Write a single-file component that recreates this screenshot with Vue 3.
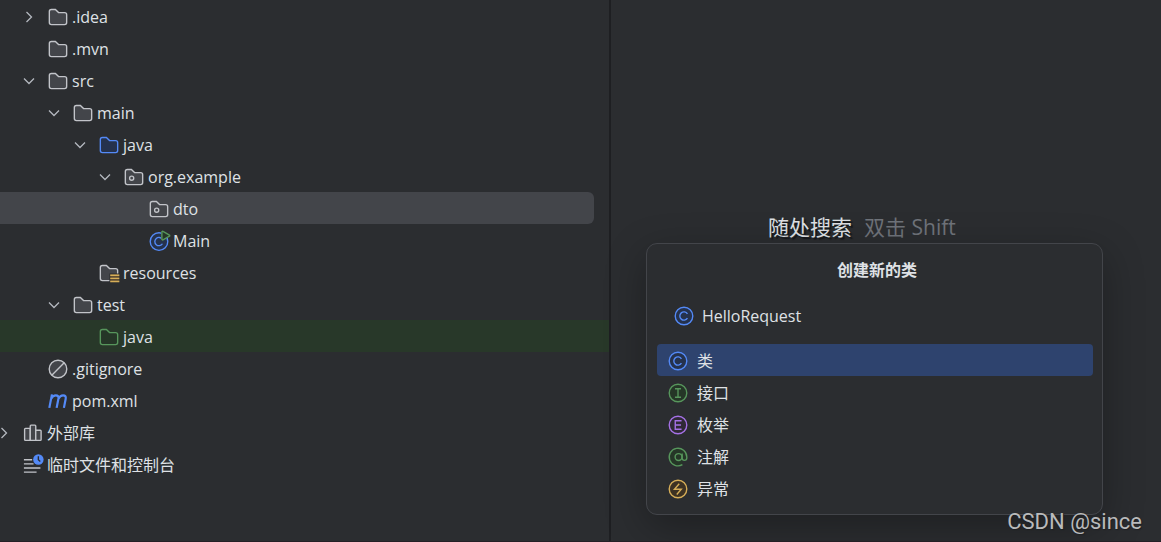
<script setup>
import { ref } from 'vue'

const INDENTS = [0, 25, 50, 76, 101, 126]

const rows = [
  { label: '.idea', depth: 1, icon: 'folder', arrow: 'right' },
  { label: '.mvn', depth: 1, icon: 'folder' },
  { label: 'src', depth: 1, icon: 'folder', arrow: 'down' },
  { label: 'main', depth: 2, icon: 'folder', arrow: 'down' },
  { label: 'java', depth: 3, icon: 'folder', tone: 'blue', arrow: 'down' },
  { label: 'org.example', depth: 4, icon: 'package', arrow: 'down' },
  { label: 'dto', depth: 5, icon: 'package', state: 'selected' },
  { label: 'Main', depth: 5, icon: 'runnable' },
  { label: 'resources', depth: 3, icon: 'resources' },
  { label: 'test', depth: 2, icon: 'folder', arrow: 'down' },
  { label: 'java', depth: 3, icon: 'folder', tone: 'green', state: 'tests' },
  { label: '.gitignore', depth: 1, icon: 'ignored' },
  { label: 'pom.xml', depth: 1, icon: 'maven' },
  { label: '外部库', depth: 0, icon: 'library', arrow: 'right' },
  { label: '临时文件和控制台', depth: 0, icon: 'scratches' },
]

const kinds = [
  { id: 'class', label: '类', tone: 'blue' },
  { id: 'interface', label: '接口', tone: 'green' },
  { id: 'enum', label: '枚举', tone: 'purple' },
  { id: 'annotation', label: '注解', tone: 'green' },
  { id: 'exception', label: '异常', tone: 'amber' },
]

const name = ref('HelloRequest')
const kind = ref('class')
</script>

<template>
  <div class="ide">
    <nav class="project" aria-label="Project">
      <ul class="tree">
        <li
          v-for="(row, i) in rows"
          :key="i"
          class="row"
          :class="row.state"
          :style="{ paddingLeft: INDENTS[row.depth] + 'px' }"
        >
          <button v-if="row.arrow" class="toggle" type="button" :aria-label="row.label">
            <svg viewBox="0 0 16 16" class="chevron">
              <path v-if="row.arrow === 'down'" d="M3 5.5 8 10.5 13 5.5" />
              <path v-else d="M5.5 3 10.5 8 5.5 13" />
            </svg>
          </button>
          <span v-else class="toggle"></span>

          <svg viewBox="0 0 16 16" class="icon" :class="row.tone || 'gray'">
            <path
              v-if="row.icon === 'folder'"
              class="shape"
              d="M1.7 4C1.7 3.1 2.3 2.5 3.2 2.5H6.1L8.4 4.8H12.8C13.7 4.8 14.3 5.4 14.3 6.3V12C14.3 12.9 13.7 13.5 12.8 13.5H3.2C2.3 13.5 1.7 12.9 1.7 12Z"
            />
            <template v-else-if="row.icon === 'package'">
              <path
                class="shape"
                d="M1.7 4C1.7 3.1 2.3 2.5 3.2 2.5H6.1L8.4 4.8H12.8C13.7 4.8 14.3 5.4 14.3 6.3V12C14.3 12.9 13.7 13.5 12.8 13.5H3.2C2.3 13.5 1.7 12.9 1.7 12Z"
              />
              <circle class="shape" cx="6.3" cy="8.9" r="1.5" />
            </template>
            <template v-else-if="row.icon === 'resources'">
              <path
                class="fill"
                d="M8.3 13.5H3.2C2.3 13.5 1.7 12.9 1.7 12V4C1.7 3.1 2.3 2.5 3.2 2.5H6.1L8.4 4.8H12.8C13.7 4.8 14.3 5.4 14.3 6.3V8.4H8.3Z"
              />
              <path
                class="line"
                d="M8.3 13.5H3.2C2.3 13.5 1.7 12.9 1.7 12V4C1.7 3.1 2.3 2.5 3.2 2.5H6.1L8.4 4.8H12.8C13.7 4.8 14.3 5.4 14.3 6.3V8.4"
              />
              <path class="bars-bg" d="M8.9 9h6.6v5.6H8.9z" />
              <path class="bars" d="M8.9 9.6h6.6M8.9 11.9h6.6M8.9 14.2h6.6" />
            </template>
            <template v-else-if="row.icon === 'runnable'">
              <g class="blue">
                <circle class="shape" cx="8" cy="8.4" r="6.4" />
                <path class="line" d="M10.5 6.8A3 3 0 1 0 10.5 10" />
              </g>
              <path class="gap" d="M9.6 .2V8.2L16.4 4.2Z" />
              <path class="green shape" d="M10.1 1.4C10.1 1 10.5.8 10.9 1L15.6 3.7C15.9 3.9 15.9 4.3 15.6 4.5L10.9 7.2C10.5 7.4 10.1 7.2 10.1 6.8Z" />
            </template>
            <template v-else-if="row.icon === 'ignored'">
              <circle class="shape" cx="8" cy="8" r="6.4" />
              <path class="line" d="M3.5 12.5 12.5 3.5" />
            </template>
            <path
              v-else-if="row.icon === 'maven'"
              class="maven"
              d="M1.7 13 3.6 3.2M2.9 6.6C3.8 4.8 4.9 3.9 6.4 3.9 8 3.9 8.6 4.8 8.3 6.3L7 13M8.2 6.6C9.1 4.8 10.2 3.9 11.7 3.9 13.3 3.9 13.9 4.8 13.6 6.3L12.3 13"
            />
            <g v-else-if="row.icon === 'library'" class="gray">
              <path class="shape" d="M1.9 5.2C1.9 4.8 2.1 4.6 2.5 4.6H6V13.4H2.5C2.1 13.4 1.9 13.2 1.9 12.8Z" />
              <path class="shape" d="M6 2.9C6 2.5 6.2 2.3 6.6 2.3H9.4C9.8 2.3 10 2.5 10 2.9V13.4H6Z" />
              <path class="shape" d="M10 6H13.3C13.7 6 13.9 6.2 13.9 6.6V12.8C13.9 13.2 13.7 13.4 13.3 13.4H10Z" />
            </g>
            <template v-else-if="row.icon === 'scratches'">
              <path class="line" d="M1.4 4.2H7.4M1.4 7.2H8.4M1.4 10.2H13.4M1.4 13.2H10.6" />
              <circle class="clock" cx="11.9" cy="4" r="3.8" />
              <path class="hands" d="M11.9 1.7V4.2L13.3 5.5" />
            </template>
          </svg>
          <span class="label">{{ row.label }}</span>
        </li>
      </ul>
    </nav>

    <main class="editor">
      <p class="hint">
        <span class="hint-action">随处搜索</span>
        <span class="hint-key">双击 Shift</span>
      </p>

      <section class="popup" role="dialog" aria-labelledby="popup-title">
        <h2 id="popup-title" class="title">创建新的类</h2>
        <label class="field">
          <svg viewBox="0 0 16 16" class="icon blue">
            <circle class="shape" cx="8" cy="8" r="6.4" />
            <path class="line" d="M10.5 6.4A3 3 0 1 0 10.5 9.6" />
          </svg>
          <input v-model="name" class="name" type="text" aria-label="名称" spellcheck="false" />
        </label>
        <div class="kinds" role="listbox" aria-label="创建新的类">
          <button
            v-for="k in kinds"
            :key="k.id"
            type="button"
            role="option"
            class="kind"
            :class="{ active: kind === k.id }"
            :aria-selected="kind === k.id"
            @click="kind = k.id"
          >
            <svg viewBox="0 0 16 16" class="icon" :class="k.tone">
              <path
                v-if="k.id === 'annotation'"
                class="shape"
                d="M11.2 13.6A6.4 6.4 0 1 1 14.4 8V8.8C14.4 11 11 11 11 8.8V5.4"
              />
              <circle v-else class="shape" cx="8" cy="8" r="6.4" />
              <path v-if="k.id === 'class'" class="line" d="M10.5 6.4A3 3 0 1 0 10.5 9.6" />
              <path v-else-if="k.id === 'interface'" class="line" d="M5.8 4.9H10.2M8 4.9V11.1M5.8 11.1H10.2" />
              <path v-else-if="k.id === 'enum'" class="line" d="M10.6 4.9H6V11.1H10.6M6 8H10.2" />
              <circle v-else-if="k.id === 'annotation'" class="line" cx="8.4" cy="8" r="2.5" />
              <path v-else class="line" d="M8.9 4.2 5.4 8.2H10.4L7.1 12" />
            </svg>
            <span>{{ k.label }}</span>
          </button>
        </div>
      </section>
    </main>

    <div class="watermark">CSDN @since</div>
  </div>
</template>

<style>
body {
  background: #2b2d30;
}
</style>

<style scoped>
.ide {
  position: relative;
  display: flex;
  box-sizing: border-box;
  min-height: 100vh;
  overflow: hidden;
  border-bottom: 1px solid #252026;
  background: #2b2d30;
  color: #dfe1e5;
  font: 16px/30px "Open Sans", "Noto Sans CJK SC", sans-serif;
}

.project {
  flex: none;
  box-sizing: border-box;
  width: 52.62%;
  border-right: 2px solid #1e1f22;
}

.tree {
  margin: 0;
  padding: 0;
  list-style: none;
}

.row {
  display: flex;
  align-items: center;
  box-sizing: border-box;
  height: 32px;
  padding-top: 2px;
}

.row.selected {
  margin-right: 15px;
  border-radius: 0 6px 6px 0;
  background: #43454a;
}

.row.tests {
  background: #283829;
}

.toggle {
  flex: none;
  display: flex;
  width: 16px;
  height: 16px;
  margin: 0 10px 0 -4px;
  padding: 0;
  border: 0;
  background: none;
}

.chevron {
  width: 16px;
  height: 16px;
  fill: none;
  stroke: #b4b8bf;
  stroke-width: 1.3;
}

.icon {
  flex: none;
  width: 22px;
  height: 22px;
  overflow: visible;
}

.label {
  margin-left: 3px;
  white-space: nowrap;
}

.gray { --stroke: #c2c4c9; --fill: #43454a; }
.blue { --stroke: #548af7; --fill: #25324d; }
.green { --stroke: #57965c; --fill: #253627; }
.purple { --stroke: #a571e6; --fill: #2f2936; }
.amber { --stroke: #d6ae58; --fill: #3d3223; }

.shape {
  fill: var(--fill);
  stroke: var(--stroke);
}

.fill {
  fill: var(--fill);
}

.line {
  fill: none;
  stroke: var(--stroke);
}

.gap { fill: #2b2d30; }
.bars-bg { fill: #5e4d33; }
.bars { fill: none; stroke: #d6ae58; }
.maven { fill: none; stroke: #548af7; stroke-width: 1.6; }
.clock { fill: #548af7; }
.hands { fill: none; stroke: #2b2d30; }

.editor {
  flex: 1;
  min-width: 0;
  display: flex;
  flex-direction: column;
}

.hint {
  display: flex;
  justify-content: center;
  gap: 12px;
  margin: 211px 48px 0 0;
  font-size: 21px;
  line-height: 32px;
  white-space: nowrap;
}

.hint-action {
  text-shadow: 2px 2px 1px #16171a;
}

.hint-key {
  color: #6f737a;
}

.popup {
  box-sizing: border-box;
  margin: 0 58px 26px 35px;
  padding: 9px 9px 10px 10px;
  border: 1px solid #43454a;
  border-radius: 11px;
  background: #2b2d30;
  box-shadow: 0 12px 40px rgba(0, 0, 0, 0.3);
}

.title {
  margin: 0 0 0 4px;
  font-size: 16px;
  line-height: 35px;
  font-weight: 700;
  text-align: center;
}

.field {
  display: flex;
  align-items: center;
  gap: 7px;
  height: 56px;
  padding: 0 16px;
}

.name {
  flex: 1;
  min-width: 0;
  padding: 0;
  border: 0;
  outline: 0;
  background: none;
  color: inherit;
  font: inherit;
}

.kinds {
  display: flex;
  flex-direction: column;
}

.kind {
  display: flex;
  align-items: center;
  gap: 8px;
  box-sizing: border-box;
  height: 32px;
  padding: 2px 10px 0;
  border: 0;
  border-radius: 4px;
  background: none;
  color: inherit;
  font: inherit;
  text-align: left;
}

.kind.active {
  background: #2e436e;
}

.watermark {
  position: absolute;
  right: 19px;
  bottom: 3px;
  color: #b9babb;
  font: 22px/32px Roboto, "Liberation Sans", sans-serif;
  text-shadow: 1px 1px 1px #1e1f22;
}
</style>
